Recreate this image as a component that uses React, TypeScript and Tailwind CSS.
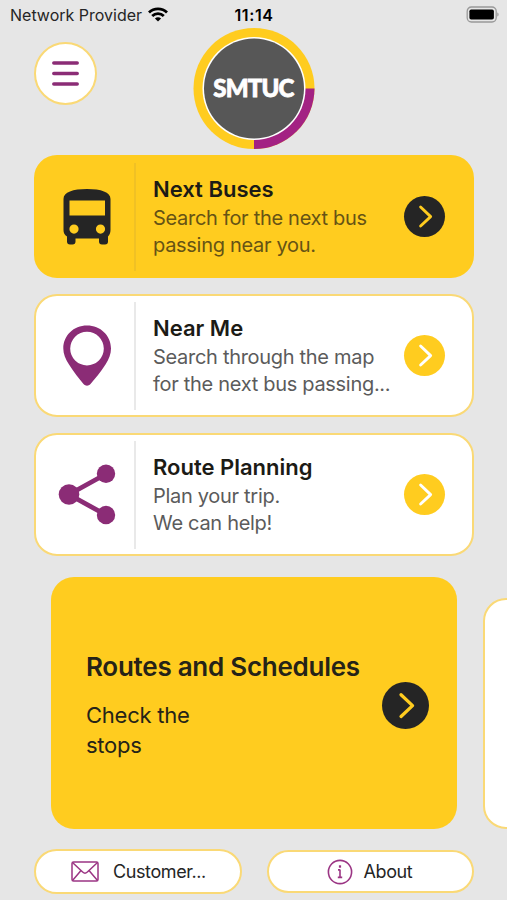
import type { ReactNode } from 'react';
import clsx from 'clsx';

interface MenuCardProps {
  title: string;
  lines: string[];
  icon: ReactNode;
  active?: boolean;
}

function Arrow({ dark, large }: { dark?: boolean; large?: boolean }) {
  return (
    <span
      className={clsx(
        'flex shrink-0 items-center justify-center rounded-full',
        large ? 'size-[47px]' : 'size-[41px]',
        dark ? 'bg-[#252525] text-[#ffcc1f]' : 'bg-[#ffcc1f] text-white',
      )}
    >
      <svg viewBox="0 0 40 40" className="size-full" fill="none" stroke="currentColor" strokeWidth="2.8" strokeLinecap="round" strokeLinejoin="round">
        <path d="M16.200 10.800L26 20.100L16.200 29.300" />
      </svg>
    </span>
  );
}

function BusIcon() {
  return (
    <svg width="48" height="56" viewBox="0 0 48 56" fill="#252525">
      <path
        fillRule="evenodd"
        d="M0.500 10C0.500 3 10 0 24 0S47.500 3 47.500 10V41C47.500 44 46.500 46 45 47.500V52.500C45 54.500 44 55.500 42 55.500H39C37 55.500 36 54.500 36 52.500V49.500H12.500V52.500C12.500 54.500 11.500 55.500 9.500 55.500H7C5 55.500 4 54.500 4 52.500V47.500C1.500 46 0.500 44 0.500 41ZM6.500 11.500V26.500H42V11.500ZM11 35.500A4.600 4.600 0 1 0 11 44.700A4.600 4.600 0 1 0 11 35.500ZM37.500 35.500A4.600 4.600 0 1 0 37.500 44.700A4.600 4.600 0 1 0 37.500 35.500Z"
      />
    </svg>
  );
}

function PinIcon() {
  return (
    <svg width="48" height="61" viewBox="0 0 48 61" fill="#8b2c76">
      <path
        fillRule="evenodd"
        d="M24 0.500C10.500 0.500 0.300 10.500 0.300 23.500C0.300 29 2.500 34 6 39.500C11 47.500 15.500 53 20.500 59C22.600 61.200 25.400 61.200 27.500 59C32.500 53 37.500 47.500 42.500 39.500C46 34 48 29 48 23.500C48 10.500 37.500 0.500 24 0.500ZM24 6.800A16.800 16.800 0 1 1 24 40.400A16.800 16.800 0 1 1 24 6.800Z"
      />
    </svg>
  );
}

function ShareIcon() {
  return (
    <svg width="58" height="61" viewBox="0 0 58 61" fill="#8b2c76" stroke="#8b2c76">
      <path d="M48 10L11 30.500L48 51" fill="none" strokeWidth="4.800" />
      <circle cx="11" cy="30.500" r="10.300" stroke="none" />
      <circle cx="48" cy="9.700" r="9.200" stroke="none" />
      <circle cx="48" cy="51" r="9.200" stroke="none" />
    </svg>
  );
}

function MenuCard({ title, lines, icon, active }: MenuCardProps) {
  return (
    <button
      className={clsx(
        'flex h-[123px] w-full items-center rounded-[23px] border-2 pr-[27px] text-left',
        active ? 'border-[#ffcc1f] bg-[#ffcc1f]' : 'border-[#fad976] bg-white',
      )}
    >
      <span className="flex w-[98px] shrink-0 justify-center pl-[4px]">{icon}</span>
      <span className={clsx('h-[108px] w-[2px] shrink-0', active ? 'bg-[#f0c125]' : 'bg-[#e9e9e9]')} />
      <span className="flex-1 pl-[17px] whitespace-nowrap">
        <span className="block pb-px text-[22px] leading-[30px] font-semibold text-[#1c1b16]">{title}</span>
        {lines.map((line) => (
          <span key={line} className={clsx('block text-[20px] leading-[27px] tracking-[-0.3px]', active ? 'text-[#665315]' : 'text-[#5b5b5b]')}>
            {line}
          </span>
        ))}
      </span>
      <Arrow dark={active} />
    </button>
  );
}

function StatusBar() {
  return (
    <div className="flex h-[28px] items-center justify-between pt-[2px] pr-2 pl-[10px] text-black">
      <div className="flex w-[200px] items-center gap-[6px]">
        <span className="text-[16px] whitespace-nowrap text-[#252525]">Network Provider</span>
        <svg width="20" height="15" viewBox="0 0 20 15" fill="none" stroke="black" strokeWidth="2.800" className="-mt-px">
          <path d="M1 5.600C6 0.700 14 0.700 19 5.600M4.200 9C7.500 5.800 12.500 5.800 15.800 9" />
          <path d="M10 14.500L6.900 11.500C8.700 9.900 11.300 9.900 13.100 11.500Z" fill="black" stroke="none" />
        </svg>
      </div>
      <span className="text-[16px] font-semibold tracking-[0.6px]">11:14</span>
      <div className="flex w-[201px] justify-end">
        <svg width="33" height="17" viewBox="0 0 33 17" className="-mt-[2px]">
          <rect x="1.200" y="1" width="29" height="15" rx="4.200" fill="none" stroke="#999" strokeWidth="1.300" />
          <rect x="3.400" y="3.400" width="24.500" height="10.200" rx="1.800" fill="black" />
          <path d="M31.300 6.500C33 7 33 10 31.300 10.500Z" fill="#999" />
        </svg>
      </div>
    </div>
  );
}

function Logo() {
  return (
    <div className="relative flex size-[122px] items-center justify-center">
      <svg viewBox="0 0 122 122" className="absolute inset-0 size-full">
        <circle cx="61" cy="60.500" r="60.500" fill="#ffcc1f" />
        <path d="M61 60.500H121.500A60.500 60.500 0 0 1 61 121Z" fill="#a32283" />
        <circle cx="61" cy="60.500" r="51.500" fill="white" />
        <circle cx="61" cy="60.500" r="50" fill="#575757" />
      </svg>
      <span className="relative pb-[2px] font-[Lato] text-[24px] font-black tracking-[-0.8px] text-white [-webkit-text-stroke:0.8px_white]">SMTUC</span>
    </div>
  );
}

export default function App() {
  return (
    <main className="h-[900px] w-[507px] overflow-hidden bg-[#e6e6e6] font-[Inter,sans-serif]">
      <StatusBar />
      <header className="grid h-[127px] grid-cols-3 items-start">
        <button aria-label="Menu" className="mt-[14px] ml-[34px] flex size-[63px] items-center justify-center rounded-full border-2 border-[#fad976] bg-white">
          <svg width="27" height="27" viewBox="0 0 27 27" stroke="#8b2c76" strokeWidth="3.500" strokeLinecap="round">
            <path d="M1.800 3H25.200M1.800 13.500H25.200M1.800 24H25.200" />
          </svg>
        </button>
        <div className="flex justify-center">
          <Logo />
        </div>
      </header>

      <nav className="flex flex-col gap-4 pr-[33px] pl-[34px]">
        <MenuCard active title="Next Buses" lines={['Search for the next bus', 'passing near you.']} icon={<BusIcon />} />
        <MenuCard title="Near Me" lines={['Search through the map', 'for the next bus passing...']} icon={<PinIcon />} />
        <MenuCard title="Route Planning" lines={['Plan your trip.', 'We can help!']} icon={<ShareIcon />} />
      </nav>

      {/* Carousel */}
      <section className="mt-[21px] ml-[51px] flex h-[252px] items-end gap-[26px]">
        <div className="flex h-full w-[406px] shrink-0 items-center rounded-[23px] bg-[#ffcc1f] pr-7 pl-[35px]">
          <div className="flex-1 pt-[3px] whitespace-nowrap text-[#252318]">
            <h2 className="text-[26px] leading-[34px] font-semibold tracking-[-0.26px]">Routes and Schedules</h2>
            <p className="mt-[16px] text-[22px] leading-[30px] tracking-[-0.25px]">
              Check the
              <br />
              stops
            </p>
          </div>
          <div className="pt-1">
            <Arrow dark large />
          </div>
        </div>
        <div className="h-[231px] w-[370px] shrink-0 rounded-[23px] border-2 border-[#fad976] bg-white" />
      </section>

      <footer className="mt-[20px] grid grid-cols-2 gap-[25px] pr-[33px] pl-[34px] text-[18px] tracking-[-0.4px] text-[#252525]">
        <button className="flex h-[45px] items-center rounded-full border-2 border-[#fad976] bg-white pl-[35px]">
          <svg width="28" height="21" viewBox="0 0 28 21" fill="none" stroke="#9b3584" strokeWidth="1.500" strokeLinejoin="round">
            <rect x="1" y="1" width="26" height="19" rx="1.500" />
            <path d="M1.500 1.500L10 9.500C11.500 11 12.200 12.200 14 12.200S16.500 11 18 9.500L26.500 1.500M1.500 19.500L10 9.500M26.500 19.500L18 9.500" />
          </svg>
          <span className="ml-[14px]">Customer...</span>
        </button>
        <button className="mt-[1px] flex h-[43px] items-center rounded-full border-2 border-[#fad976] bg-white pl-[58px]">
          <svg width="26" height="26" viewBox="0 0 26 26" fill="none" stroke="#9b3584" strokeWidth="1.600">
            <circle cx="13" cy="13" r="11.600" />
            <path d="M13 10.500V18.500M11 10.900H13M10.800 18.400H15.200" />
            <path d="M13 6.300V8.700" strokeWidth="2.200" />
          </svg>
          <span className="ml-[11px]">About</span>
        </button>
      </footer>
    </main>
  );
}
